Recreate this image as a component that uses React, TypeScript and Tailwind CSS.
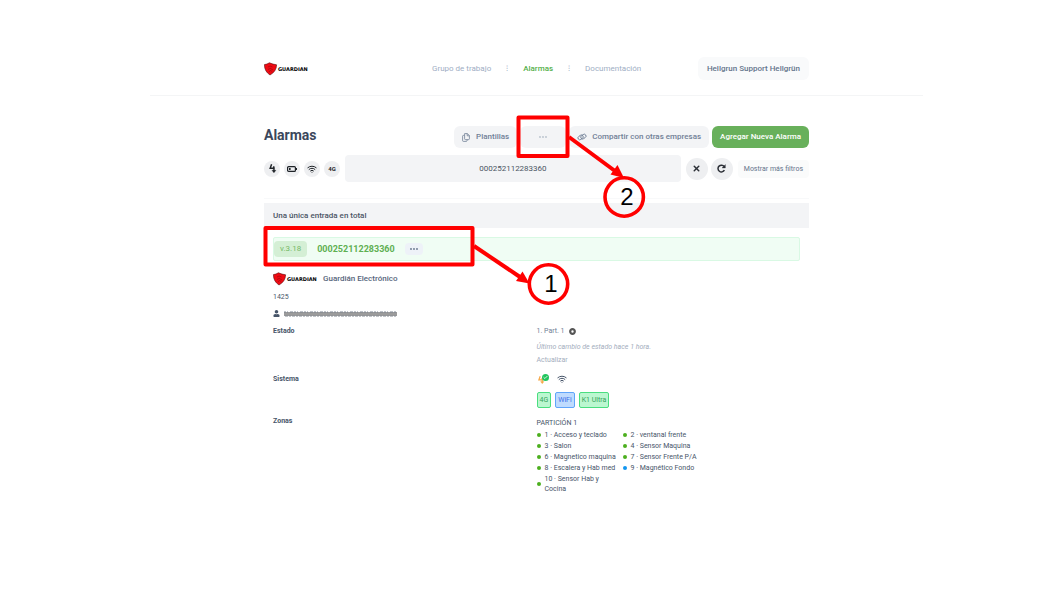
import React from 'react'
import { Check, Wifi, X } from 'lucide-react'
import { FaUser } from 'react-icons/fa'

interface Zone {
  id: number
  name: string
  color: string
}

const zones: Zone[] = [
  { id: 1, name: 'Acceso y teclado', color: 'bg-[#4caf1e]' },
  { id: 2, name: 'ventanal frente', color: 'bg-[#4caf1e]' },
  { id: 3, name: 'Salon', color: 'bg-[#4caf1e]' },
  { id: 4, name: 'Sensor Maquina', color: 'bg-[#4caf1e]' },
  { id: 6, name: 'Magnetico maquina', color: 'bg-[#4caf1e]' },
  { id: 7, name: 'Sensor Frente P/A', color: 'bg-[#4caf1e]' },
  { id: 8, name: 'Escalera y Hab med', color: 'bg-[#4caf1e]' },
  { id: 9, name: 'Magnético Fondo', color: 'bg-[#1296f0]' },
  { id: 10, name: 'Sensor Hab y Cocina', color: 'bg-[#4caf1e]' },
]

function Logo() {
  return (
    <svg className="h-[14px] w-[46px] shrink-0" viewBox="0 0 46 14" role="img" aria-label="Guardian">
      <path d="M0.4 2.6 Q3 2.4 5.4 0.8 Q9 2.4 12.6 2.8 Q12.4 9.5 6 13 Q0.4 9.5 0.4 2.6Z" fill="#f00a12" stroke="#5a0a0e" strokeWidth="0.6" />
      <path d="M4 5 Q6 3 8.5 5 M4 7.5 Q6 5 9 8 M5 10 Q6.2 7 8 9.5" fill="none" stroke="#8d0b12" strokeWidth="0.6" />
      <text x="14" y="9" className="fill-black font-['DejaVu_Sans',sans-serif] text-[5px] font-bold">GUARDIAN</text>
    </svg>
  )
}

function Dots({ className }: { className: string }) {
  return (
    <svg className={className} viewBox="0 0 8 2" fill="currentColor">
      <circle cx="1" cy="1" r="0.9" />
      <circle cx="4" cy="1" r="0.9" />
      <circle cx="7" cy="1" r="0.9" />
    </svg>
  )
}

// Two-stroke lightning with a small arrow tip
function Bolt({ className }: { className: string }) {
  return (
    <svg className={className} viewBox="0 0 10 10" fill="none" stroke="currentColor" strokeWidth="1.6">
      <path d="M4 0.3 L2.4 4.8 H6.6 V8.4" />
      <path d="M4.4 7 L6.6 9.8 L8.8 7Z" fill="currentColor" strokeWidth="0.4" />
      <path d="M6.4 2.4 V5" />
    </svg>
  )
}

function FilterButton({ label, children }: { label: string; children: React.ReactNode }) {
  return (
    <button aria-label={label} className="flex size-4 items-center justify-center rounded-full bg-[#eeeff1] text-[#1f2328]">
      {children}
    </button>
  )
}

// Numbered red callouts drawn over the page
function Callouts() {
  return (
    <svg className="pointer-events-none absolute top-0 left-0 h-[224px] w-[545px] overflow-visible" viewBox="264 96 545 224">
      <g fill="none" stroke="#ff0000" strokeWidth="4">
        <rect x="265.5" y="228" width="207" height="36.5" strokeLinejoin="round" />
        <rect x="518.5" y="117.5" width="49" height="38.5" strokeLinejoin="round" />
        <path d="M474 246 L520 277" />
        <path d="M569 137 L615 171" />
      </g>
      <path d="M529.5 283.5 L516 281 L522.5 271.5Z" fill="#ff0000" />
      <path d="M624 178 L610.5 174.5 L617.5 165Z" fill="#ff0000" />
      <g fill="#ffffff" stroke="#ff0000" strokeWidth="3.6">
        <circle cx="548.5" cy="284" r="19.2" />
        <circle cx="624.2" cy="197" r="19.2" fillOpacity="0" />
      </g>
      <g className="fill-black font-['Liberation_Sans',sans-serif] text-[24px]" textAnchor="middle">
        <text x="551" y="292">1</text>
        <text x="627" y="205">2</text>
      </g>
    </svg>
  )
}

export default function App() {
  return (
    <div className="min-h-screen bg-white pl-[15px] font-['Roboto',sans-serif] text-[7px] leading-[10px] text-[#475569]">
      <header className="mx-auto max-w-[773px] border-b border-[#f4f5f6] pt-[57px] pb-[15px]">
        <div className="mx-auto flex max-w-[545px] items-center text-[8px]">
          <a href="#" className="w-[168px]">
            <Logo />
          </a>
          <nav className="flex items-center gap-[15px] text-[#a0aec4]">
            <a href="#">Grupo de trabajo</a>
            <span className="w-[2px]">⁝</span>
            <a href="#" className="font-medium text-[#55b04b]">Alarmas</a>
            <span className="w-[2px]">⁝</span>
            <a href="#">Documentación</a>
          </nav>
          <button className="ml-auto h-[23px] rounded-md bg-[#f9fafb] px-[9px] font-medium text-[#64748b]">
            Hellgrun Support Hellgrün
          </button>
        </div>
      </header>

      <main className="relative mx-auto max-w-[545px]">
        <div className="flex items-center gap-[3px] pt-[30px] text-[8px] text-[#718096]">
          <h1 className="mr-auto self-start text-[14px] leading-[18px] font-bold text-[#3b475c]">Alarmas</h1>
          <button className="flex h-[22px] items-center gap-[6px] rounded-md bg-[#f3f4f6] px-2 font-medium">
            <svg className="h-[9px] w-2" viewBox="0 0 8 9" fill="none" stroke="currentColor" strokeWidth="0.8">
              <path d="M2.8 0.6 H5.4 L7.4 2.6 V5.8 Q7.4 6.6 6.6 6.6 H3.4 Q2.6 6.6 2.6 5.8 V0.6Z M5.2 0.6 V2.8 H7.4" />
              <path d="M2.4 2.4 H1.4 Q0.6 2.4 0.6 3.2 V7.6 Q0.6 8.4 1.4 8.4 H4.4 Q5.2 8.4 5.2 6.8" />
            </svg>
            Plantillas
          </button>
          <button aria-label="Más acciones" className="flex h-[22px] w-[46px] items-center justify-center rounded-md bg-[#f3f4f6]">
            <Dots className="h-[2px] w-2 text-[#b8c0cc]" />
          </button>
          <button className="flex h-[22px] items-center gap-[5px] rounded-md bg-[#f3f4f6] px-2 font-medium">
            <svg className="h-2 w-[10px]" viewBox="0 0 10 8" fill="none" stroke="currentColor" strokeWidth="0.9">
              <rect x="0.8" y="2.6" width="5.6" height="3.6" rx="1.8" transform="rotate(-35 3.6 4.4)" />
              <rect x="3.6" y="1.8" width="5.6" height="3.6" rx="1.8" transform="rotate(-35 6.4 3.6)" />
            </svg>
            Compartir con otras empresas
          </button>
          <button className="h-[22px] rounded-md bg-[#68b05b] px-2 font-medium text-white">Agregar Nueva Alarma</button>
        </div>

        <div className="flex h-[51px] items-start gap-[5px] border-b border-[#f8f9fa] pt-[7px]">
          <div className="flex h-[27px] items-center gap-1">
            <FilterButton label="Energía">
              <Bolt className="size-[9px]" />
            </FilterButton>
            <FilterButton label="Batería">
              <svg className="h-[6px] w-[10px]" viewBox="0 0 10 6">
                <rect x="0.6" y="0.6" width="7.8" height="4.8" rx="1" fill="none" stroke="currentColor" strokeWidth="1.2" />
                <path d="M2 2 H3.6 V4 H2Z M8.8 2 H10 V4 H8.8Z" fill="currentColor" />
              </svg>
            </FilterButton>
            <FilterButton label="WiFi">
              <Wifi className="size-[10px]" strokeWidth={2.4} />
            </FilterButton>
            <FilterButton label="4G">
              <span className="text-[6px] font-bold">4G</span>
            </FilterButton>
          </div>
          <input
            aria-label="Buscar alarma"
            defaultValue="000252112283360"
            className="h-[27px] min-w-0 flex-1 rounded-sm bg-[#f3f4f6] text-center text-[8px] text-[#4b5563]"
          />
          <div className="flex h-[27px] items-center gap-[3px]">
            <button aria-label="Limpiar" className="flex size-[22px] items-center justify-center rounded-full bg-[#eeeff1] text-[#2b2f36]">
              <X className="size-[9px]" strokeWidth={4} />
            </button>
            <button aria-label="Recargar" className="flex size-[22px] items-center justify-center rounded-full bg-[#eeeff1] text-[#2b2f36]">
              <svg className="size-[9px]" viewBox="0 0 9 9" fill="none" stroke="currentColor" strokeWidth="1.5">
                <path d="M7.4 6.2 A3.4 3.4 0 1 1 7.2 2.6" />
                <path d="M8.4 0.6 V4 H5Z" fill="currentColor" strokeWidth="0.3" />
              </svg>
            </button>
            <button className="ml-[2px] h-[18px] rounded-sm bg-[#fafbfb] px-[6px] text-[#64748b]">Mostrar más filtros</button>
          </div>
        </div>

        <section className="pt-1">
          <h2 className="bg-[#f3f4f6] px-[9px] py-[7px] text-[8px] leading-[11px] font-medium text-[#4b5565]">Una única entrada en total</h2>

          <div className="px-[9px] pt-[9px]">
            <div className="flex h-6 items-center rounded-xs border border-[#d9f9e4] bg-[#f0fdf4]">
              <span className="rounded-sm bg-[#d4efd5] px-[6px] py-[3px] text-[8px] text-[#74b968]">v.3.18</span>
              <a href="#" className="ml-[10px] text-[9px] font-bold text-[#5fb052]">000252112283360</a>
              <button aria-label="Opciones" className="ml-[10px] flex h-3 w-[18px] items-center justify-center rounded-sm bg-[#eef2f8] text-[#64748b]">
                <Dots className="h-[2px] w-2" />
              </button>
            </div>

            <div className="flex items-center gap-1 pt-[11px] text-[8px] font-medium text-[#56657b]">
              <Logo />
              Guardián Electrónico
            </div>
            <p className="pt-[6px]">1425</p>
            <div className="flex items-center gap-1 pt-2 pb-[9px]">
              <FaUser className="size-[7px]" />
              <svg className="h-[6px] w-[114px]" viewBox="0 0 114 6">
                <path d="M0 3 H113" stroke="#9b9b9b" strokeWidth="4" />
                <path d="M0 1 H113" stroke="#7d8490" strokeWidth="1" strokeDasharray="2 1 1 2 3 1" />
                <path d="M1 5 H113" stroke="#868b93" strokeWidth="1" strokeDasharray="3 1 2 1" />
              </svg>
            </div>

            <dl className="grid grid-cols-2">
              <dt className="font-bold">Estado</dt>
              <dd className="h-12 text-[#a3adbd]">
                <p className="flex items-center gap-1 text-[#718096]">
                  1. Part. 1
                  <svg className="size-[7px]" viewBox="0 0 7 7">
                    <circle cx="3.5" cy="3.5" r="2.3" fill="none" stroke="#555555" strokeWidth="2.2" />
                  </svg>
                </p>
                <p className="pt-[6px] italic">Último cambio de estado hace 1 hora.</p>
                <a href="#" className="block pt-[3px]">Actualizar</a>
              </dd>

              <dt className="font-bold">Sistema</dt>
              <dd className="h-[42px]">
                <div className="flex items-center gap-2">
                  <span className="relative flex h-[10px] w-3 items-end text-[#f6a94a]">
                    <Bolt className="size-2" />
                    <span className="absolute top-0 right-0 flex size-[7px] items-center justify-center rounded-full bg-[#22c55e]">
                      <Check className="size-[5px] text-white" strokeWidth={4} />
                    </span>
                  </span>
                  <Wifi className="size-[10px]" strokeWidth={2.4} />
                </div>
                <div className="flex gap-1 pt-2">
                  <span className="rounded-xs border border-[#4ade80] bg-[#bbf7d0] px-[2px] py-px leading-3 text-[#35a35c]">4G</span>
                  <span className="rounded-xs border border-[#60a5fa] bg-[#bfdbfe] px-[2px] py-px leading-3 text-[#3b6fe8]">WiFi</span>
                  <span className="rounded-xs border border-[#4ade80] bg-[#bbf7d0] px-[2px] py-px leading-3 text-[#35a35c]">K1 Ultra</span>
                </div>
              </dd>

              <dt className="font-bold">Zonas</dt>
              <dd className="pt-[2px]">
                <p>PARTICIÓN 1</p>
                <ul className="grid w-[172px] grid-cols-2 gap-y-px pt-[2px]">
                  {zones.map((zone) => (
                    <li key={zone.id} className="flex items-center gap-1">
                      <span className={`size-1 shrink-0 rounded-full ${zone.color}`} />
                      <span className="max-w-[74px]">
                        {zone.id} · {zone.name}
                      </span>
                    </li>
                  ))}
                </ul>
              </dd>
            </dl>
          </div>
        </section>

        <Callouts />
      </main>
    </div>
  )
}
